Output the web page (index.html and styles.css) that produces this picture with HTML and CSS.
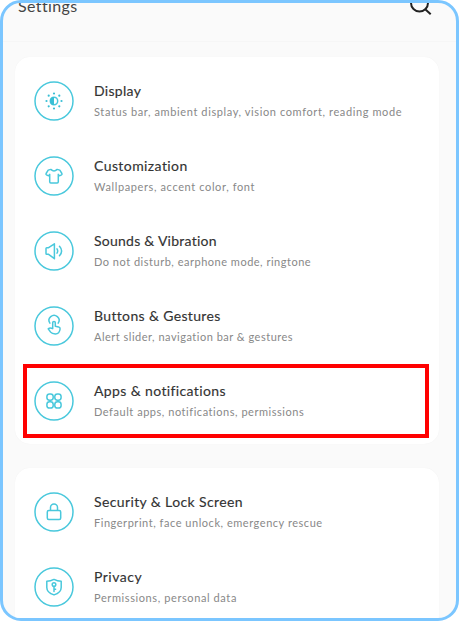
FILE: index.html
```html
<!DOCTYPE html>
<html lang="en">
<head>
<meta charset="utf-8">
<title>Settings</title>
<link rel="stylesheet" href="styles.css">
</head>
<body>
<div class="screen">
  <header class="header">
    <h1 class="heading">Settings</h1>
    <svg class="search" viewBox="0 0 24 24"><circle cx="10.5" cy="10" r="8.5"/><path d="M16.5 16.5l5.2 4.8"/></svg>
  </header>
  <main class="content">
    <section class="card">
      <div class="row">
        <svg class="icon" viewBox="0 0 40 40"><circle class="ring" cx="20" cy="20" r="19"/><circle cx="20" cy="20" r="3.7"/><path class="solid" d="M20 16a4 4 0 0 0 0 8z"/><g class="solid"><circle cx="20" cy="12.5" r="1.1"/><circle cx="20" cy="27.5" r="1.1"/><circle cx="12.5" cy="20" r="1.1"/><circle cx="27.5" cy="20" r="1.1"/><circle cx="14.7" cy="14.7" r="1.1"/><circle cx="25.3" cy="14.7" r="1.1"/><circle cx="14.7" cy="25.3" r="1.1"/><circle cx="25.3" cy="25.3" r="1.1"/></g></svg>
        <div class="copy"><h2 class="title display">Display</h2><p class="detail display-detail">Status bar, ambient display, vision comfort, reading mode</p></div>
      </div>
      <div class="row">
        <svg class="icon" viewBox="0 0 40 40"><circle class="ring" cx="20" cy="20" r="19"/><path d="M16.8 13.4l-2.6.7-2.1 3.4q-.4.8.4 1.3l1.5.8q.8.3 1.1-.4l.6-.9v7.5q0 1.1 1.1 1.1h6.4q1.1 0 1.1-1.1v-7.5l.6.9q.3.7 1.1.4l1.5-.8q.8-.5.4-1.3l-2.1-3.4-2.6-.7q-3.2 3.2-6.4 0z"/></svg>
        <div class="copy"><h2 class="title custom">Customization</h2><p class="detail custom-detail">Wallpapers, accent color, font</p></div>
      </div>
      <div class="row">
        <svg class="icon" viewBox="0 0 40 40"><circle class="ring" cx="20" cy="20" r="19"/><path d="M12 17.5v5q0 .8.8.8h1.8l5.8 4.4V12.8l-5.8 3.9h-1.8q-.8 0-.8.8zM23 17.8q1.4 2.2 0 4.4M25.5 15.3q4.2 4.7 0 9.4"/></svg>
        <div class="copy"><h2 class="title sounds">Sounds &amp; Vibration</h2><p class="detail sounds-detail">Do not disturb, earphone mode, ringtone</p></div>
      </div>
      <div class="row">
        <svg class="icon" viewBox="0 0 40 40"><circle class="ring" cx="20" cy="20" r="19"/><path d="M15.9 17.2a5 5 0 1 1 8.3 0M18.7 22.4v-5.8q0-1.2 1.3-1.2t1.3 1.2v3.6l3.3.7q1.7.5 1.5 2.1-.6 4.9-4.7 4.9-3.5 0-4.8-1.8l-2.4-3.3q1.8-1.6 4.5-.2z"/></svg>
        <div class="copy"><h2 class="title buttons">Buttons &amp; Gestures</h2><p class="detail">Alert slider, navigation bar &amp; gestures</p></div>
      </div>
      <div class="row selected">
        <svg class="icon" viewBox="0 0 40 40"><circle class="ring" cx="20" cy="20" r="19"/><rect x="12.9" y="12.9" width="6.3" height="6.3" rx="2.7"/><rect x="20.8" y="12.9" width="6.3" height="6.3" rx="2.7"/><rect x="12.9" y="20.8" width="6.3" height="6.3" rx="2.7"/><rect x="20.8" y="20.8" width="6.3" height="6.3" rx="2.7"/></svg>
        <div class="copy"><h2 class="title apps">Apps &amp; notifications</h2><p class="detail apps-detail">Default apps, notifications, permissions</p></div>
      </div>
    </section>
    <section class="card">
      <div class="row">
        <svg class="icon" viewBox="0 0 40 40"><circle class="ring" cx="20" cy="20" r="19"/><rect x="13.3" y="18.6" width="13.4" height="9" rx="1.5"/><path d="M16.5 18.3v-2.7a3.5 3.5 0 0 1 7 0v2.7"/></svg>
        <div class="copy"><h2 class="title security">Security &amp; Lock Screen</h2><p class="detail security-detail">Fingerprint, face unlock, emergency rescue</p></div>
      </div>
      <div class="row">
        <svg class="icon" viewBox="0 0 40 40"><circle class="ring" cx="20" cy="20" r="19"/><path d="M20 12.4q3.5 1.8 7.2 1.8v6.2q0 5.1-7.2 7.5-7.2-2.4-7.2-7.5v-6.2q3.7 0 7.2-1.8zM20 19.3v5.3M20 22.3h1.6"/><circle cx="20" cy="17.6" r="1.8"/></svg>
        <div class="copy"><h2 class="title privacy">Privacy</h2><p class="detail privacy-detail">Permissions, personal data</p></div>
      </div>
    </section>
  </main>
</div>
</body>
</html>
```

FILE: styles.css
```css
* { box-sizing: border-box; }
body { margin: 0; background: #fff; font-family: Lato, "Liberation Sans", sans-serif; }
.screen { width: 459px; height: 621px; overflow: hidden; border: 3px solid #7bc6ff; border-radius: 21px; background: #fafafa; }
.header { display: flex; justify-content: space-between; height: 39px; padding: 0 23px 0 15px; border-bottom: 1px solid #f6f6f6; }
.heading { margin: -7px 0 0; font-size: 16px; font-weight: 400; line-height: 20px; letter-spacing: .38px; color: #444; }
.search { width: 24px; height: 24px; margin-top: -10px; fill: none; stroke: #222; stroke-width: 2; }
.content { padding: 15px 17px 0 12px; }
.card { margin-bottom: 24px; padding: 6px 8px; border-radius: 15px; background: #fff; box-shadow: 0 0 1px #eee; }
.row { display: flex; align-items: center; height: 75px; padding-left: 11px; }
.row.selected { width: 406px; height: 74px; margin: 1px 0 0; border: 4px solid #f00; padding-left: 7px; }
.icon { flex: none; width: 40px; height: 40px; margin-right: 20px; fill: none; stroke: #49c8dc; stroke-width: 1.5; stroke-linejoin: round; stroke-linecap: round; }
.icon .ring { stroke-width: 1.5; }
.icon .solid { fill: #39bfd5; stroke: none; }
.copy { white-space: nowrap; }
.title { margin: 0; font-size: 14px; font-weight: 400; line-height: 20px; color: #333; -webkit-text-stroke: .15px #333; }
.detail { margin: 2px 0 0; font-size: 11px; font-weight: 400; line-height: 18px; color: #888; letter-spacing: .5px; }
.display { letter-spacing: .3px; }
.custom { letter-spacing: .42px; }
.sounds { letter-spacing: .25px; }
.buttons { letter-spacing: .35px; }
.apps { letter-spacing: .38px; }
.security { letter-spacing: .38px; }
.privacy { letter-spacing: .5px; }
.display-detail { letter-spacing: .61px; }
.custom-detail { letter-spacing: .62px; }
.sounds-detail { letter-spacing: .51px; }
.apps-detail, .security-detail { letter-spacing: .54px; }
.privacy-detail { letter-spacing: .6px; }
```
